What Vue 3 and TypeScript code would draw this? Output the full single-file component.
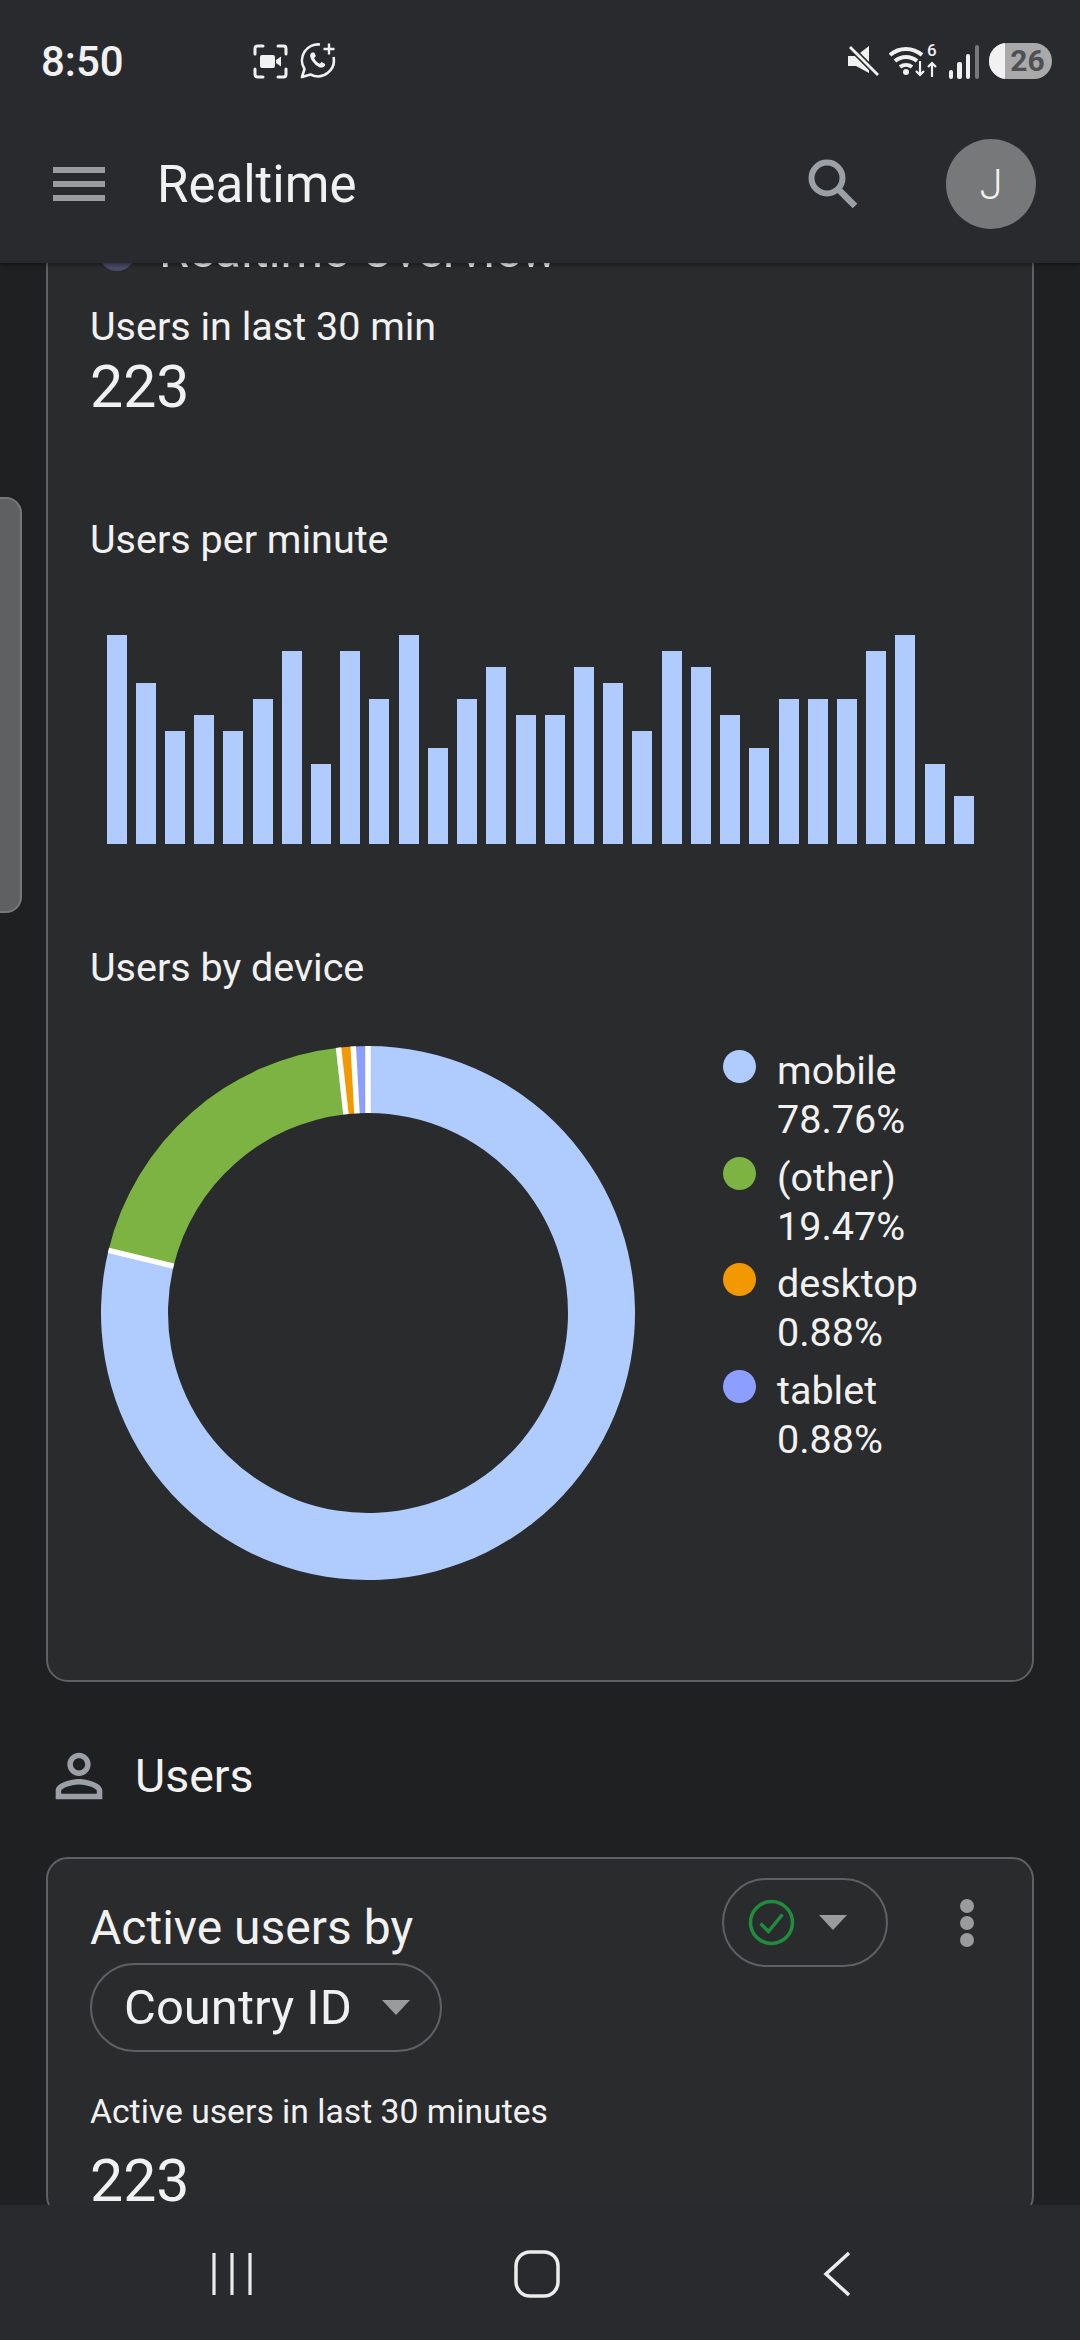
<template>
  <div class="screen">
    <header class="appbar">
      <div class="status">
        <span class="time">8:50</span>
        <svg class="st-icon" width="35" height="35" viewBox="0 0 35 35">
          <path d="M2 10V4.500A2.500 2.500 0 0 1 4.500 2H10M25 2h5.500A2.500 2.500 0 0 1 33 4.500V10M33 25v5.500a2.500 2.500 0 0 1-2.500 2.500H25M10 33H4.500A2.500 2.500 0 0 1 2 30.500V25" fill="none" stroke="#f1f1f1" stroke-width="3" stroke-linecap="round" />
          <rect x="7" y="11" width="15" height="13" rx="2" fill="#f1f1f1" />
          <path d="M23 16l5-3.500v10L23 19z" fill="#f1f1f1" />
        </svg>
        <svg class="st-icon wa" width="36" height="36" viewBox="0 0 36 36">
          <path d="M20 1.500A16 16 0 0 0 4.500 26L2 34l8.500-2.500A16 16 0 0 0 33.500 14" fill="none" stroke="#f1f1f1" stroke-width="2.600" stroke-linejoin="round" />
          <path d="M12.500 10.500c-2 1.500-2 4 .5 7.500s6 6 8.500 5.500c1.800-.4 3-2 2.500-3l-3-1.800-1.700 1.500c-2-.7-4-3-4.800-5l1.500-1.700-1.500-3z" transform="translate(-2.500 -2.500) scale(1.150)" fill="#f1f1f1" />
          <path d="M29 .5v11M23.500 6h11" stroke="#f1f1f1" stroke-width="2.400" />
        </svg>
        <div class="status-right">
          <svg width="32" height="30" viewBox="0 0 32 30">
            <path d="M1 10h8L22 0v27L9 20H1z" fill="#f1f1f1" />
            <path d="M1 -1l29 29" stroke="#292a2d" stroke-width="6" />
            <path d="M3 1l28 28" stroke="#f1f1f1" stroke-width="2.800" />
          </svg>
          <svg class="wifi" width="50" height="34" viewBox="0 0 50 34">
            <path d="M1 11a24 24 0 0 1 32 0M6 17a17 17 0 0 1 22 0M11 23a10 10 0 0 1 12 0" fill="none" stroke="#f1f1f1" stroke-width="4" />
            <circle cx="17" cy="28" r="3" fill="#f1f1f1" />
            <path d="M31 17v14M27 27l4 4 4-4M43 33V19M39 23l4-4 4 4" fill="none" stroke="#f1f1f1" stroke-width="2.200" />
            <text x="38" y="12" class="six">6</text>
          </svg>
          <div class="signal">
            <i v-for="(h, n) in signalBars" :key="n" :class="{ off: n === 3 }" :style="{ height: h + 'px' }"></i>
          </div>
          <div class="battery"><span class="fill"></span><b>26</b></div>
        </div>
      </div>
      <div class="toolbar">
        <svg class="menu" width="52" height="34" viewBox="0 0 52 34">
          <path d="M0 3h52M0 17h52M0 31h52" stroke="#9a9b9c" stroke-width="6" />
        </svg>
        <span class="title">Realtime</span>
        <svg class="search" width="50" height="50" viewBox="0 0 50 50">
          <circle cx="19" cy="19" r="15.500" fill="none" stroke="#9aa0a6" stroke-width="6" />
          <path d="M30 30l17 17" stroke="#9aa0a6" stroke-width="6.500" />
        </svg>
        <div class="avatar">J</div>
      </div>
    </header>

    <main class="content">
      <div class="side-handle"></div>

      <section class="card overview">
        <div class="card-title">
          <span class="title-dot"></span>
          <span class="title-text">Realtime Overview</span>
        </div>
        <div class="label first">Users in last 30 min</div>
        <div class="big">223</div>

        <div class="label per-minute">Users per minute</div>
        <div class="bars">
          <span v-for="(v, n) in perMinute" :key="n" class="bar" :style="{ height: v * 16.08 + 'px' }"></span>
        </div>

        <div class="label by-device">Users by device</div>
        <div class="device-row">
          <svg class="donut" width="534" height="534" viewBox="0 0 534 534">
            <path v-for="s in segments" :key="s.name" :d="s.path" :fill="s.color" />
            <line
              v-for="s in segments"
              :key="s.name + '-sep'"
              :x1="s.sep[0]"
              :y1="s.sep[1]"
              :x2="s.sep[2]"
              :y2="s.sep[3]"
              stroke="#fff"
              stroke-width="5.500"
            />
          </svg>
          <ul class="legend">
            <li v-for="d in devices" :key="d.name">
              <span class="swatch" :style="{ background: d.color }"></span>
              <span class="legend-text">{{ d.name }}<br />{{ d.pct.toFixed(2) }}%</span>
            </li>
          </ul>
        </div>
      </section>

      <div class="section-head">
        <svg width="70" height="70" viewBox="0 0 24 24">
          <path fill="#9aa0a6" d="M12 5.900c1.160 0 2.100.94 2.100 2.100s-.94 2.100-2.100 2.100S9.900 9.160 9.900 8s.94-2.100 2.100-2.100m0 9c2.970 0 6.100 1.460 6.100 2.100v1.100H5.900V17c0-.64 3.130-2.100 6.100-2.100M12 4C9.790 4 8 5.790 8 8s1.790 4 4 4 4-1.790 4-4-1.790-4-4-4zm0 9c-2.670 0-8 1.340-8 4v3h16v-3c0-2.660-5.330-4-8-4z" />
        </svg>
        <span>Users</span>
      </div>

      <section class="card active">
        <div class="active-top">
          <div class="active-title">
            <div class="by">Active users by</div>
            <div class="pill country">
              <span>Country ID</span>
              <i class="caret"></i>
            </div>
          </div>
          <div class="pill check">
            <svg width="47" height="47" viewBox="0 0 47 47">
              <circle cx="23.500" cy="23.500" r="21" fill="none" stroke="#1e8e3e" stroke-width="3.500" />
              <path d="M12.500 24.500l8 8 14-17" fill="none" stroke="#1e8e3e" stroke-width="3.500" />
            </svg>
            <i class="caret"></i>
          </div>
          <div class="kebab"><i></i><i></i><i></i></div>
        </div>
        <div class="sub">Active users in last 30 minutes</div>
        <div class="big second">223</div>
      </section>
    </main>

    <nav class="navbar">
      <svg width="40" height="44" viewBox="0 0 40 44">
        <path d="M2 1v42M20 1v42M38 1v42" stroke="#ececec" stroke-width="3.200" />
      </svg>
      <svg width="46" height="48" viewBox="0 0 46 48">
        <rect x="2" y="2" width="42" height="44" rx="14" fill="none" stroke="#ececec" stroke-width="3.500" />
      </svg>
      <svg width="30" height="46" viewBox="0 0 30 46">
        <path d="M27 2L4 23l23 21" fill="none" stroke="#ececec" stroke-width="3.500" />
      </svg>
    </nav>
  </div>
</template>

<script setup lang="ts">
interface Device {
  name: string
  pct: number
  color: string
}

const signalBars = [9, 17, 25, 34]

const perMinute = [
  13, 10, 7, 8, 7, 9, 12, 5, 12, 9, 13, 6, 9, 11, 8, 8, 11, 10, 7, 12, 11, 8, 6, 9, 9, 9, 12, 13, 5, 3,
]

const devices: Device[] = [
  { name: 'mobile', pct: 78.76, color: '#b0cbfd' },
  { name: '(other)', pct: 19.47, color: '#7cb342' },
  { name: 'desktop', pct: 0.88, color: '#f29900' },
  { name: 'tablet', pct: 0.88, color: '#8c9eff' },
]

const C = 267
const R_OUT = 267
const R_IN = 200

function polar(r: number, turn: number): [number, number] {
  const a = turn * Math.PI * 2
  return [C + r * Math.sin(a), C - r * Math.cos(a)]
}

// rings are drawn clockwise from the top, like the chart lib does
const total = devices.reduce((sum, d) => sum + d.pct, 0)
let acc = 0
const segments = devices.map((d) => {
  const from = acc / total
  acc += d.pct
  const to = acc / total
  const large = to - from > 0.5 ? 1 : 0
  const [ax, ay] = polar(R_OUT, from)
  const [bx, by] = polar(R_OUT, to)
  const [cx, cy] = polar(R_IN, to)
  const [ex, ey] = polar(R_IN, from)
  return {
    name: d.name,
    color: d.color,
    path: `M${ax} ${ay}A${R_OUT} ${R_OUT} 0 ${large} 1 ${bx} ${by}L${cx} ${cy}A${R_IN} ${R_IN} 0 ${large} 0 ${ex} ${ey}Z`,
    sep: [ex, ey, ax, ay],
  }
})
</script>

<style>
html,
body {
  margin: 0;
  background: #1f2022;
}
</style>

<style scoped>
.screen {
  width: 1080px;
  height: 2340px;
  display: flex;
  flex-direction: column;
  overflow: hidden;
  background: #1f2022;
  color: #f1f1f1;
  font-family: Roboto, 'Noto Sans', sans-serif;
}

.appbar {
  height: 263px;
  flex: none;
  background: #292a2d;
  box-shadow: 0 2px 4px rgba(0, 0, 0, 0.4);
  position: relative;
  z-index: 2;
}

.status {
  height: 122px;
  display: flex;
  align-items: center;
  padding: 0 28px 0 41px;
}

.time {
  font-size: 42px;
  font-weight: 500;
  width: 212px;
}

.wa {
  margin-left: 12px;
}

.status-right {
  margin-left: auto;
  display: flex;
  align-items: center;
  gap: 10px;
}

.six {
  font-size: 17px;
  font-weight: 500;
  fill: #f1f1f1;
}

.signal {
  display: flex;
  align-items: flex-end;
  gap: 4.300px;
  height: 36px;
}

.signal i {
  width: 4.400px;
  background: #f1f1f1;
  border-radius: 2px;
}

.signal i.off {
  background: #77787a;
}

.battery {
  width: 63px;
  height: 36px;
  border-radius: 18px;
  background: #a9a9a9;
  position: relative;
  overflow: hidden;
  text-align: center;
  font-size: 30px;
  line-height: 36px;
  color: #4f5053;
}

.battery b {
  position: relative;
  margin-left: 14px;
}

.fill {
  position: absolute;
  left: 0;
  top: 0;
  bottom: 0;
  width: 16px;
  background: #f1f1f1;
}

.toolbar {
  height: 124px;
  display: flex;
  align-items: center;
  padding: 0 44px 0 53px;
}

.title {
  margin-left: 52px;
  font-size: 51px;
}

.search {
  margin-left: auto;
  margin-right: 88px;
}

.avatar {
  width: 90px;
  height: 90px;
  border-radius: 50%;
  background: #77787a;
  display: flex;
  align-items: center;
  justify-content: center;
  font-size: 42px;
  font-weight: 300;
}

.content {
  flex: 1;
  min-height: 0;
  overflow: hidden;
  padding: 0 46px;
  position: relative;
}

.side-handle {
  position: absolute;
  left: -3px;
  top: 234px;
  width: 21px;
  height: 412px;
  background: #5f6062;
  border: 2px solid #77787a;
  border-radius: 0 16px 16px 0;
}

.card {
  background: #2a2b2d;
  border: 2.750px solid #5f6063;
  border-radius: 22px;
  padding: 0 40px 0 42px;
}

.overview {
  margin-top: -80px;
  padding-top: 26px;
  padding-bottom: 100px;
}

.card-title {
  height: 60px;
  display: flex;
  align-items: flex-end;
  gap: 24px;
  font-size: 48.500px;
  line-height: 60px;
  margin-left: 9px;
}

.title-text {
  margin-bottom: -10px;
}

.title-dot {
  width: 36px;
  height: 36px;
  border-radius: 50%;
  background: #4a4c68;
}

.label {
  font-size: 39.500px;
  line-height: 50px;
}

.label.first {
  margin-top: 31px;
}

.big {
  font-size: 59px;
  line-height: 70px;
}

.per-minute {
  margin-top: 93px;
}

.bars {
  margin: 70px 18px 0 16.500px;
  height: 209px;
  display: flex;
  align-items: flex-end;
  justify-content: space-between;
}

.bar {
  width: 20px;
  background: #b0cbfd;
}

.by-device {
  margin-top: 99px;
}

.device-row {
  margin-top: 53px;
  display: flex;
  align-items: flex-start;
}

.donut {
  margin-left: 11px;
  flex: none;
}

.legend {
  list-style: none;
  margin: -6px 0 0 88px;
  padding: 0;
}

.legend li {
  display: flex;
  height: 106.500px;
}

.swatch {
  width: 33px;
  height: 33px;
  border-radius: 50%;
  margin-top: 10px;
  flex: none;
}

.legend-text {
  margin: 6px 0 0 21px;
  font-size: 39.500px;
  line-height: 49px;
  white-space: nowrap;
}

.section-head {
  height: 175px;
  display: flex;
  align-items: center;
  gap: 21px;
  margin-left: -2px;
  font-size: 46.500px;
  padding-top: 13px;
  box-sizing: border-box;
}

.active-top {
  display: flex;
  align-items: flex-start;
  padding-top: 19px;
}

.active-title {
  flex: 1;
}

.by {
  font-size: 48px;
  line-height: 68px;
  margin-top: 16px;
}

.pill {
  height: 89px;
  box-sizing: border-box;
  border: 2.750px solid #5f6063;
  border-radius: 45px;
  display: inline-flex;
  align-items: center;
}

.country {
  margin-top: 1px;
  width: 352px;
  padding-left: 32px;
  font-size: 49px;
}

.country .caret {
  margin-left: 30px;
}

.check {
  width: 166px;
  padding-left: 24px;
  margin-right: 72px;
}

.check .caret {
  margin-left: 24px;
}

.caret {
  width: 0;
  height: 0;
  border-left: 14px solid transparent;
  border-right: 14px solid transparent;
  border-top: 15px solid #9a9b9c;
}

.kebab {
  display: flex;
  flex-direction: column;
  gap: 3px;
  padding-top: 21px;
  margin-right: 18px;
}

.kebab i {
  width: 14px;
  height: 14px;
  border-radius: 50%;
  background: #9a9b9c;
}

.sub {
  margin-top: 38px;
  font-size: 33.700px;
  line-height: 44px;
}

.second {
  margin-top: 12px;
}

.navbar {
  height: 135px;
  flex: none;
  background: #292a2d;
  display: flex;
  align-items: center;
  position: relative;
  z-index: 2;
  padding: 2px 228px 0 212px;
  box-sizing: border-box;
  justify-content: space-between;
}
</style>
